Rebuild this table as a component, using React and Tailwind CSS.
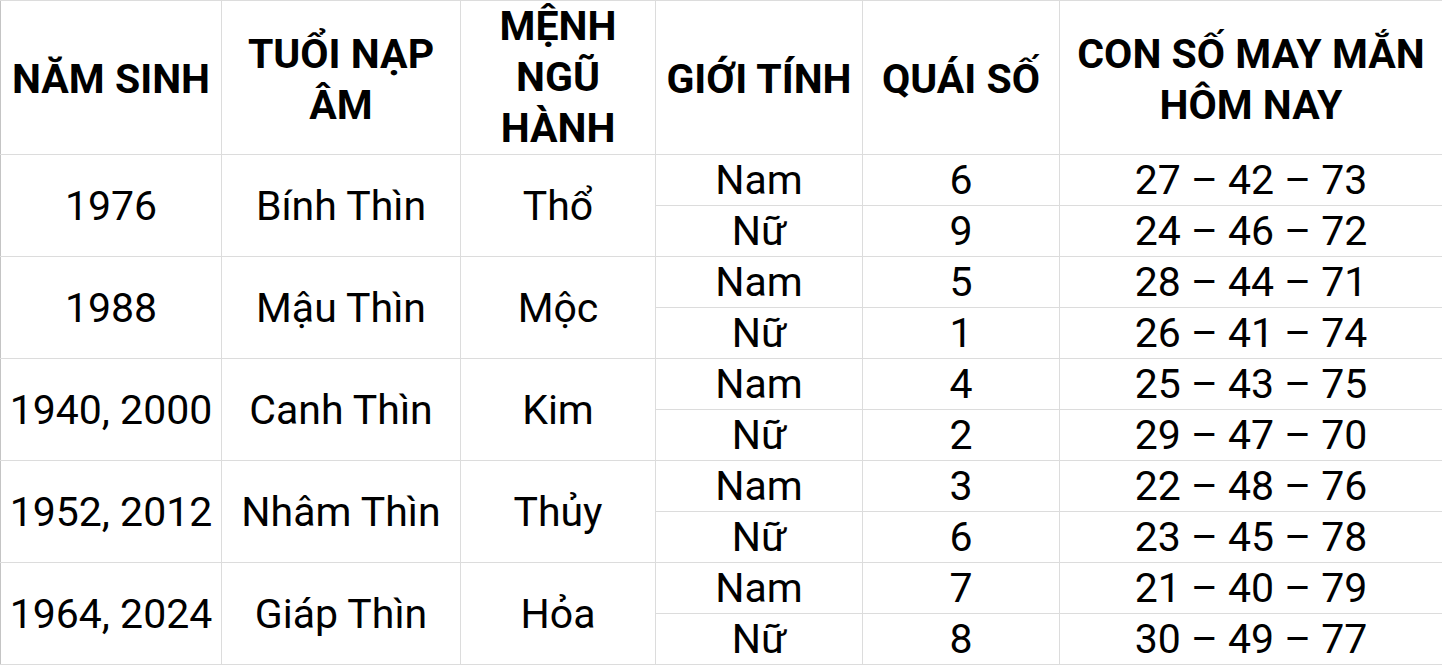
const rows = [
  { year: '1976', tuoi: 'Bính Thìn', menh: 'Thổ', nam: ['6', '27 – 42 – 73'], nu: ['9', '24 – 46 – 72'] },
  { year: '1988', tuoi: 'Mậu Thìn', menh: 'Mộc', nam: ['5', '28 – 44 – 71'], nu: ['1', '26 – 41 – 74'] },
  { year: '1940, 2000', tuoi: 'Canh Thìn', menh: 'Kim', nam: ['4', '25 – 43 – 75'], nu: ['2', '29 – 47 – 70'] },
  { year: '1952, 2012', tuoi: 'Nhâm Thìn', menh: 'Thủy', nam: ['3', '22 – 48 – 76'], nu: ['6', '23 – 45 – 78'] },
  { year: '1964, 2024', tuoi: 'Giáp Thìn', menh: 'Hỏa', nam: ['7', '21 – 40 – 79'], nu: ['8', '30 – 49 – 77'] },
];

const cell = 'border border-[#dcdcdc] text-center align-middle p-0';

export default function App() {
  return (
    <div className="w-[1442px] h-[665px] bg-white overflow-hidden font-['Roboto',sans-serif] text-black">
      <table className="table-fixed border-collapse w-[1442px] text-[41px] leading-[50px]">
        <colgroup>
          <col className="w-[221px]" />
          <col className="w-[239px]" />
          <col className="w-[195px]" />
          <col className="w-[207px]" />
          <col className="w-[197px]" />
          <col className="w-[383px]" />
        </colgroup>
        <thead>
          <tr className="h-[154px] font-bold leading-[51px]">
            <th className={`${cell} border-l-[#c4c4c4] font-bold pt-1`}>NĂM SINH</th>
            <th className={`${cell} font-bold pt-1`}>TUỔI NẠP<br />ÂM</th>
            <th className={`${cell} font-bold`}>MỆNH<br />NGŨ<br />HÀNH</th>
            <th className={`${cell} font-bold pt-1`}>GIỚI TÍNH</th>
            <th className={`${cell} font-bold pt-1`}>QUÁI SỐ</th>
            <th className={`${cell} font-bold pt-1`}>CON SỐ MAY MẮN<br />HÔM NAY</th>
          </tr>
        </thead>
        <tbody>
          {rows.map((r) => (
            <>
              <tr key={r.year + 'a'} className="h-[51px]">
                <td rowSpan={2} className={`${cell} border-l-[#c4c4c4]`}>{r.year}</td>
                <td rowSpan={2} className={cell}>{r.tuoi}</td>
                <td rowSpan={2} className={cell}>{r.menh}</td>
                <td className={cell}>Nam</td>
                <td className={cell}>{r.nam[0]}</td>
                <td className={cell}>{r.nam[1]}</td>
              </tr>
              <tr key={r.year + 'b'} className="h-[51px]">
                <td className={cell}>Nữ</td>
                <td className={cell}>{r.nu[0]}</td>
                <td className={cell}>{r.nu[1]}</td>
              </tr>
            </>
          ))}
        </tbody>
      </table>
    </div>
  );
}
